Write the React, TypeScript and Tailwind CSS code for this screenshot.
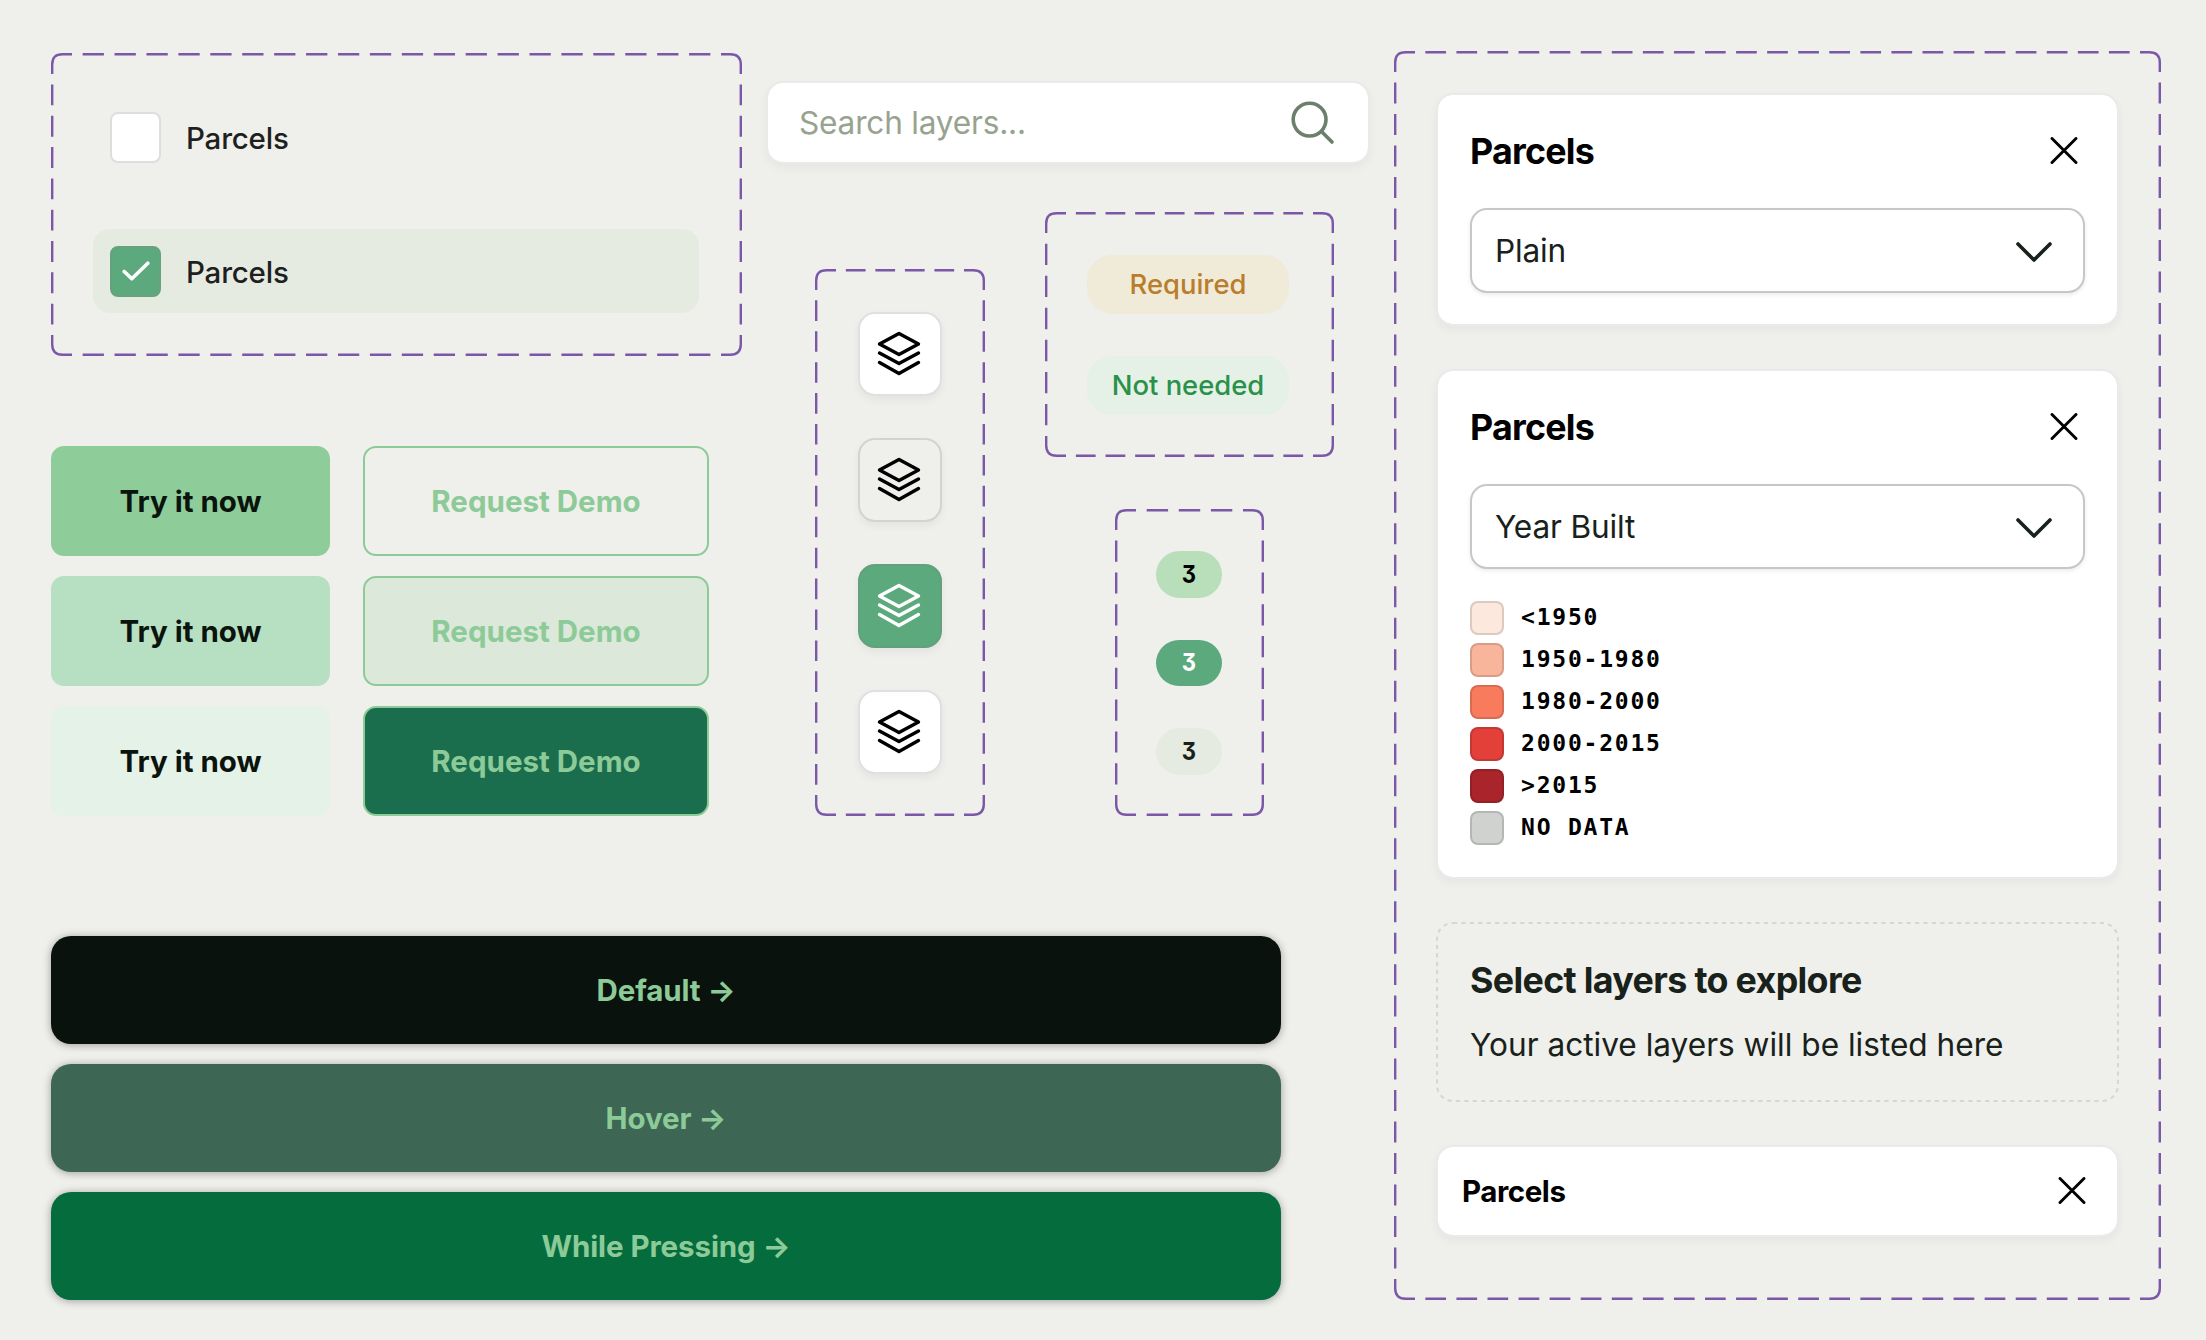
import { useState } from 'react';
import type { ReactNode } from 'react';
import clsx from 'clsx';

interface FrameProps {
    width: number;
    height: number;
    className?: string;
    children: ReactNode;
}

// Dash lengths are stretched per side so that every corner ends on a full arm
const ARM = 21;
const dashUnit = (length: number) => {
    const count = Math.round(((length - ARM * 2) / 10.5 - 1) / 3);
    return (length - ARM * 2) / (count * 3 + 1);
};

function Frame({ width, height, className, children }: FrameProps) {
    const ux = dashUnit(width);
    const uy = dashUnit(height);
    const r = width - 1.2;
    const b = height - 1.2;

    return (
        <div className={clsx('relative shrink-0', className)}>
            <svg
                className="absolute inset-0 pointer-events-none"
                width={width}
                height={height}
                fill="none"
                stroke="#7b57a8"
                strokeWidth="2.4"
            >
                <path d={`M1.2 ${ARM}V11.5Q1.2 1.2 11.5 1.2H${ARM}`} />
                <path d={`M${width - ARM} 1.2H${r - 10.5}Q${r} 1.2 ${r} 11.5V${ARM}`} />
                <path d={`M${r} ${height - ARM}V${b - 10.5}Q${r} ${b} ${r - 10.5} ${b}H${width - ARM}`} />
                <path d={`M${ARM} ${b}H11.5Q1.2 ${b} 1.2 ${b - 10.5}V${height - ARM}`} />
                <path d={`M${ARM + ux} 1.2H${width - ARM}M${ARM + ux} ${b}H${width - ARM}`} strokeDasharray={`${ux * 2} ${ux}`} />
                <path d={`M1.2 ${ARM + uy}V${height - ARM}M${r} ${ARM + uy}V${height - ARM}`} strokeDasharray={`${uy * 2} ${uy}`} />
            </svg>
            {children}
        </div>
    );
}

function LayersIcon() {
    return (
        <svg width="46" height="46" viewBox="0 0 46 46" fill="none" stroke="currentColor" strokeWidth="3.4" strokeLinecap="round" strokeLinejoin="round">
            <path d="M22 2.5L41.5 13L22 23.5L2.5 13Z" />
            <path d="M2.5 22L22 32.5L41.5 22" />
            <path d="M2.5 31.5L22 42.5L41.5 31.5" />
        </svg>
    );
}

function CloseIcon() {
    return (
        <svg width="28" height="28" viewBox="0 0 28 28" fill="none" stroke="#000" strokeWidth="2.9" strokeLinecap="round">
            <path d="M2 1.5L26 25.5M26 1.5L2 25.5" />
        </svg>
    );
}

function SearchIcon() {
    return (
        <svg width="44" height="44" viewBox="0 0 44 44" fill="none" stroke="#6b7f6c" strokeWidth="3.6" strokeLinecap="round">
            <circle cx="18.6" cy="18.6" r="16.4" />
            <path d="M30.5 30.5L41 41" />
        </svg>
    );
}

function CheckRow({ checked, onChange }: { checked: boolean; onChange: () => void }) {
    return (
        <button onClick={onChange} className={clsx('w-[606px] h-[84px] rounded-[17px] pl-[17px] flex items-center gap-[25px]', checked && 'bg-[#e5ebe1]')}>
            <span
                className={clsx(
                    'w-[51px] h-[51px] rounded-[8px] border-2 flex items-center justify-center',
                    checked ? 'bg-[#5ba97d] border-[#66a37c]' : 'bg-white border-[#dededf]'
                )}
            >
                {checked && (
                    <svg width="28" height="20" viewBox="0 0 28 20" fill="none" stroke="#fff" strokeWidth="3.6" strokeLinecap="round" strokeLinejoin="round">
                        <path d="M2.2 10.5L9.8 17.8L25.8 2.2" />
                    </svg>
                )}
            </span>
            <span className="text-[29.5px] leading-none font-medium text-[#1f1f1f] tracking-[-0.2px] pt-[3px]">Parcels</span>
        </button>
    );
}

function Select({ value }: { value: string }) {
    return (
        <div className="h-[85px] rounded-[17px] border-2 border-[#c6c7c6] bg-white shadow-[0_2px_4px_rgba(0,0,0,0.08)] pl-[23px] pr-[30px] flex items-center justify-between">
            <span className="text-[31.6px] leading-none text-[#18211a] tracking-[-0.15px]">{value}</span>
            <svg width="38" height="22" viewBox="0 0 38 22" fill="none" stroke="#18211a" strokeWidth="3.6" strokeLinecap="round" strokeLinejoin="round">
                <path d="M3 4L19 20L35 4" />
            </svg>
        </div>
    );
}

const cardStyle = 'rounded-[17px] border-2 border-[#e9eae9] bg-white bg-clip-padding shadow-[0_4px_10px_rgba(0,0,0,0.045)]';

function LayerCard({ value, className, children }: { value: string; className: string; children?: ReactNode }) {
    return (
        <div className={clsx(cardStyle, 'px-[32px] pt-[38px]', className)}>
            <div className="h-[36px] mb-[39px] pr-[7px] flex items-center justify-between">
                <h3 className="text-[35.8px] leading-none font-bold text-black tracking-[-0.75px] pt-[2px]">Parcels</h3>
                <CloseIcon />
            </div>
            <Select value={value} />
            {children}
        </div>
    );
}

const tools = [
    'bg-white border-[#dfe0e2] text-black',
    'bg-[#efefeb] border-[#d3d4d1] text-black',
    'bg-[#5ba97d] border-[#64a17b] text-white',
    'bg-white border-[#dfe0e2] text-black',
];

const counts = ['bg-[#b8dfb9] text-black', 'bg-[#5ba97d] text-white', 'bg-[#e5ebe1] text-[#18211a]'];

const ctas = [
    { primary: 'bg-[#8ecd99]', outline: 'bg-transparent' },
    { primary: 'bg-[#b7dfc2]', outline: 'bg-[#dbe8da]' },
    { primary: 'bg-[#e5f2e8]', outline: 'bg-[#1a6e4d]' },
];

const wideButtons = [
    { label: 'Default', color: 'bg-[#09120c]' },
    { label: 'Hover', color: 'bg-[#3d6655]' },
    { label: 'While Pressing', color: 'bg-[#056c3e]' },
];

const legend = [
    { label: '<1950', color: 'bg-[#fde8de]' },
    { label: '1950-1980', color: 'bg-[#f9b59c]' },
    { label: '1980-2000', color: 'bg-[#f87b5e]' },
    { label: '2000-2015', color: 'bg-[#e3403a]' },
    { label: '>2015', color: 'bg-[#aa242b]' },
    { label: 'NO DATA', color: 'bg-[#d0d2d0]' },
];

export default function App() {
    const [rows, setRows] = useState([false, true]);

    const toggleRow = (index: number) => {
        setRows(prev => prev.map((value, i) => (i === index ? !value : value)));
    };

    return (
        <div className="w-[2206px] h-[1340px] overflow-hidden bg-[#efefeb] pl-[51px] pt-[51px] flex items-start font-['Inter',sans-serif]">
            <div className="w-[1343px] shrink-0">
                <div className="h-[885px] flex">
                    {/* Checkboxes and call to action buttons */}
                    <div className="w-[715px] pt-[2px]">
                        <Frame width={691} height={303} className="w-[691px] h-[303px] pl-[42px] pt-[42px] flex flex-col gap-[50px]">
                            {rows.map((checked, i) => (
                                <CheckRow key={i} checked={checked} onChange={() => toggleRow(i)} />
                            ))}
                        </Frame>
                        <div className="mt-[90px] flex flex-col gap-5">
                            {ctas.map(({ primary, outline }) => (
                                <div key={primary} className="flex gap-[33px]">
                                    <button className={clsx('w-[279px] h-[110px] rounded-[13px] text-[29.5px] font-bold text-[#0a140d]', primary)}>
                                        Try it now
                                    </button>
                                    <button className={clsx('w-[346px] h-[110px] rounded-[13px] border-2 border-[#8ccb98] text-[29.5px] font-bold text-[#8ccb98]', outline)}>
                                        Request Demo
                                    </button>
                                </div>
                            ))}
                        </div>
                    </div>

                    <div className="w-[604px] pt-[30px]">
                        <div className={clsx(cardStyle, 'h-[83px] pl-[31px] pr-[33px] flex items-center justify-between')}>
                            <span className="text-[31.6px] leading-none text-[#97a38f] tracking-[-0.2px]">Search layers...</span>
                            <SearchIcon />
                        </div>

                        <div className="pl-[49px] pt-[48px] flex gap-[60px]">
                            <Frame width={170} height={547} className="w-[170px] h-[547px] mt-[57px] pt-[43px] flex flex-col items-center gap-[42px]">
                                {tools.map((style, i) => (
                                    <button
                                        key={i}
                                        className={clsx('w-[84px] h-[84px] rounded-[17px] border-2 shadow-[0_4px_8px_rgba(0,0,0,0.05)] flex items-center justify-center', style)}
                                    >
                                        <LayersIcon />
                                    </button>
                                ))}
                            </Frame>

                            <div className="flex flex-col items-center gap-[52px]">
                                <Frame width={289} height={245} className="w-[289px] h-[245px] pt-[43px] pr-[3px] flex flex-col items-center gap-[42px] text-[27.4px] font-medium">
                                    <div className="w-[202px] h-[59px] rounded-[25px] bg-[#f0ead9] text-[#b97d2b] flex items-center justify-center">Required</div>
                                    <div className="w-[202px] h-[59px] rounded-[25px] bg-[#e5f0e6] text-[#2a9149] flex items-center justify-center">Not needed</div>
                                </Frame>
                                <Frame width={149} height={307} className="w-[149px] h-[307px] pt-[42px] pr-px flex flex-col items-center gap-[42px]">
                                    {counts.map(style => (
                                        <div key={style} className={clsx("w-[66px] h-[46.5px] rounded-full flex items-center justify-center text-[24.5px] font-bold [font-feature-settings:'cv09']", style)}>
                                            <span className="scale-x-90">3</span>
                                        </div>
                                    ))}
                                </Frame>
                            </div>
                        </div>
                    </div>
                </div>

                <div className="w-[1230px] flex flex-col gap-5">
                    {wideButtons.map(({ label, color }) => (
                        <button
                            key={label}
                            className={clsx('h-[108px] rounded-[20px] shadow-[0_1px_8px_rgba(0,0,0,0.35)] text-[29.5px] font-bold tracking-[-0.1px] text-[#8ccb98]', color)}
                        >
                            {label} →
                        </button>
                    ))}
                </div>
            </div>

            {/* Active layers */}
            <Frame width={767} height={1249} className="w-[767px] h-[1249px] px-[42px] pt-[42px] flex flex-col gap-[43px]">
                <LayerCard value="Plain" className="h-[233px]" />
                <LayerCard value="Year Built" className="h-[510px]">
                    <ul className="mt-[32px] flex flex-col gap-[8px]">
                        {legend.map(({ label, color }) => (
                            <li key={label} className="h-[34px] flex items-center gap-[17px]">
                                <span className={clsx('w-[34px] h-[34px] rounded-[8px] border-2 border-black/13', color)} />
                                <span className="font-['DejaVu_Sans_Mono',monospace] font-bold text-[23px] leading-none tracking-[1.78px] text-black whitespace-pre pb-[2px]">{label}</span>
                            </li>
                        ))}
                    </ul>
                </LayerCard>
                <div className="relative h-[180px] px-[34px] pt-[38px] text-[#18211a]">
                    <svg className="absolute inset-0 pointer-events-none" width="683" height="180" fill="none" stroke="#d5d7d2" strokeWidth="2.1" strokeDasharray="4.2 4.2">
                        <rect x="1" y="1" width="681" height="178" rx="16" />
                    </svg>
                    <h3 className="text-[35.8px] leading-[40px] font-bold tracking-[-0.66px]">Select layers to explore</h3>
                    <p className="mt-[25px] text-[31.6px] leading-[40px]">Your active layers will be listed here</p>
                </div>
                <div className={clsx(cardStyle, 'h-[92px] pl-[24px] pr-[31px] flex items-center justify-between')}>
                    <h4 className="text-[29.5px] leading-none font-bold text-black tracking-[-0.45px] pt-px">Parcels</h4>
                    <CloseIcon />
                </div>
            </Frame>
        </div>
    );
}
